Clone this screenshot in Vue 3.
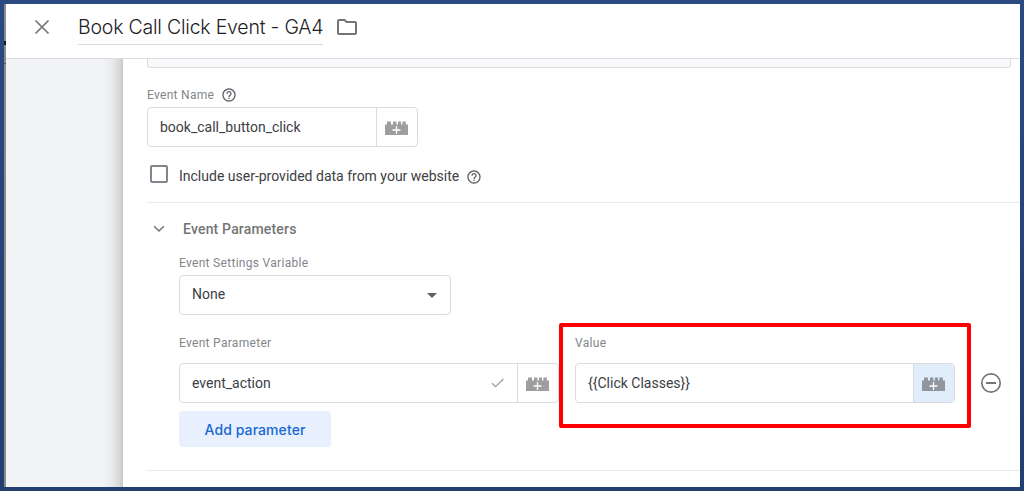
<script setup>
import { h } from 'vue'

const clickValue = '{{Click Classes}}'

const BrickIcon = () =>
  h('svg', { width: 23, height: 14, viewBox: '0 0 23 14' }, [
    h('path', {
      fill: 'currentColor',
      d: 'M0 3.4h2V0.6h4v2.8h2V0.6h3.4v2.8h1.6V0.6h3v2.8h1.4V0.6h3.4v2.8h2.2V14H0z',
    }),
    h('path', { d: 'M11.5 5v8M7.5 9h8', stroke: '#fff', 'stroke-width': 1.3 }),
  ])

const HelpIcon = () =>
  h('svg', { width: 16, height: 16, viewBox: '0 0 24 24', fill: '#5f6368' }, [
    h('path', {
      d: 'M11 18h2v-2h-2v2zm1-16C6.48 2 2 6.48 2 12s4.48 10 10 10 10-4.48 10-10S17.52 2 12 2zm0 18c-4.41 0-8-3.59-8-8s3.59-8 8-8 8 3.59 8 8-3.59 8-8 8zm0-14c-2.21 0-4 1.79-4 4h2c0-1.1.9-2 2-2s2 .9 2 2c0 2-3 1.75-3 5h2c0-2.25 3-2.5 3-5 0-2.21-1.79-4-4-4z',
    }),
  ])
</script>

<template>
  <div class="frame">
    <div class="strip"><i class="strip-mark"></i><i class="strip-line"></i></div>
    <div class="sheet">
      <header class="header">
        <svg class="close" width="16" height="16" viewBox="0 0 16 16">
          <path d="M1.5 1.5l13 13M14.5 1.5l-13 13" stroke="#757575" stroke-width="1.7" />
        </svg>
        <h1 class="title"><span>Book Call Click Event - GA4</span></h1>
        <svg class="folder" width="24" height="24" viewBox="0 0 24 24">
          <path
            fill="#757575"
            d="M9.17 6l2 2H20v10H4V6h5.17M10 4H4c-1.1 0-1.99.9-1.99 2L2 18c0 1.1.9 2 2 2h16c1.1 0 2-.9 2-2V8c0-1.1-.9-2-2-2h-8l-2-2z"
          />
        </svg>
      </header>
      <div class="body">
        <aside class="gutter"></aside>
        <main class="panel">
          <div class="cut-box"></div>
          <div class="label name-label"><span class="t-name">Event Name</span><HelpIcon class="help" /></div>
          <div class="field name-field">
            <div class="input"><span class="t-book">book_call_button_click</span></div>
            <div class="brick"><BrickIcon /></div>
          </div>
          <div class="check-row">
            <i class="checkbox"></i>
            <span class="t-include">Include user-provided data from your website</span>
            <HelpIcon class="help" />
          </div>
          <div class="section-head">
            <svg width="12" height="8" viewBox="0 0 12 8">
              <path d="M1.2 1.2L6 6l4.8-4.8" fill="none" stroke="#757575" stroke-width="1.5" />
            </svg>
            <h2><span>Event Parameters</span></h2>
          </div>
          <section class="params">
            <div class="label"><span class="t-settings">Event Settings Variable</span></div>
            <div class="field select">
              <span class="t-none">None</span>
              <i class="caret"></i>
            </div>
            <div class="pair">
              <div class="col">
                <div class="label"><span class="t-param">Event Parameter</span></div>
                <div class="field">
                  <div class="input">
                    <span class="t-action">event_action</span>
                    <svg class="tick" width="14" height="10" viewBox="0 0 14 10">
                      <path d="M1 5.3l3.5 3.4L12.4 1" fill="none" stroke="#9e9e9e" stroke-width="1.3" />
                    </svg>
                  </div>
                  <div class="brick"><BrickIcon /></div>
                </div>
              </div>
              <div class="col value-col">
                <div class="label"><span class="t-value">Value</span></div>
                <div class="field">
                  <div class="input"><span class="t-click">{{ clickValue }}</span></div>
                  <div class="brick active"><BrickIcon /></div>
                </div>
                <i class="highlight"></i>
              </div>
              <svg class="minus" width="22" height="22" viewBox="0 0 22 22">
                <circle cx="11" cy="11" r="9.2" fill="none" stroke="#757575" stroke-width="1.7" />
                <path d="M6 11h10" stroke="#757575" stroke-width="2" />
              </svg>
            </div>
            <button class="add"><span>Add parameter</span></button>
          </section>
          <div class="divider"></div>
        </main>
      </div>
    </div>
  </div>
</template>

<style>
body { margin: 0; overflow: hidden; }
</style>

<style scoped>
.frame {
  box-sizing: border-box;
  width: 1024px;
  height: 491px;
  padding: 4px;
  display: flex;
  overflow: hidden;
  background: linear-gradient(#2a4a82, #233e70);
  font-family: Roboto, "Liberation Sans", sans-serif;
  font-size: 14px;
  color: #3c4043;
}
.frame * { box-sizing: border-box; }
span { white-space: nowrap; }
svg { display: block; flex: none; }
.strip { width: 2px; background: #8b8b8b; position: relative; }
.strip-mark { position: absolute; left: 0; top: 37px; width: 2px; height: 4px; background: #17171c; }
.strip-line { position: absolute; left: 0; top: 59px; width: 2px; height: 1px; background: #555; }
.sheet { flex: 1; background: #fff; display: flex; flex-direction: column; }
.header {
  height: 55px;
  flex: none;
  display: flex;
  align-items: flex-start;
  border-bottom: 1px solid #dadce0;
}
.close { margin: 15px 0 0 28px; }
.title {
  margin: 7px 0 0 28px;
  width: 245px;
  height: 34px;
  border-bottom: 1px solid #dadce0;
  font: 300 19.5px/32px Inter, sans-serif;
  letter-spacing: -0.21px;
  color: #202124;
}
.folder { margin: 11px 0 0 12px; }
.body { flex: 1; display: flex; min-height: 0; }
.gutter {
  width: 117px;
  background: linear-gradient(to right, #f1f3f4 0, #f1f3f4 98px, #e8eaeb 106px, #dadcdd 112px, #c8caca 117px);
}
.panel { flex: 1; padding-left: 24px; }
.cut-box {
  width: 864px;
  height: 9px;
  background: #f8f9fa;
  border: 1px solid #dadce0;
  border-top: 0;
  border-radius: 0 0 4px 4px;
}
.label { height: 16px; display: flex; align-items: center; font-size: 12px; color: #80868b; }
.name-label { margin-top: 19px; }
.help { margin-left: 7px; }
.field { height: 40px; display: flex; border: 1px solid #dadce0; border-radius: 4px; overflow: hidden; }
.name-field { width: 271px; margin-top: 4px; }
.input { flex: 1; display: flex; align-items: center; padding: 0 12px; }
.brick {
  width: 41px;
  border-left: 1px solid #dadce0;
  display: flex;
  align-items: center;
  justify-content: center;
  padding: 1px 1px 0 0;
  color: #9e9e9e;
}
.brick.active { background: #e2edfb; color: #8f969f; }
.check-row { height: 56px; border-bottom: 1px solid #e8eaed; display: flex; align-items: flex-start; padding: 18px 0 0 3px; }
.checkbox { width: 18px; height: 18px; border: 2px solid #80868b; border-radius: 2px; margin-right: 11px; }
.check-row span { line-height: 22px; }
.check-row .help { margin-top: 4px; }
.section-head { height: 52px; display: flex; align-items: center; padding-left: 6px; }
.section-head h2 { margin: 0 0 0 18px; font-size: 14px; line-height: 20px; font-weight: 500; letter-spacing: 0.18px; color: #757575; }
.params { padding-left: 32px; }
.select { width: 272px; margin-top: 4px; padding: 0 13px 0 12px; align-items: center; justify-content: space-between; }
.t-none { padding-bottom: 2px; }
.caret { border: 5px solid transparent; border-top-color: #616161; border-bottom: 0; }
.pair { display: flex; margin-top: 20px; }
.col { width: 380px; }
.value-col { margin-left: 16px; position: relative; }
.pair .field { margin-top: 12px; }
.tick { margin-left: auto; }
.highlight { position: absolute; left: -16px; top: -12px; width: 412px; height: 105px; border: 4px solid #f00; border-radius: 2px; }
.minus { margin: 37px 0 0 25px; }
.add {
  display: block;
  width: 152px;
  height: 36px;
  margin-top: 8px;
  padding: 2px 0 0;
  border: 0;
  border-radius: 4px;
  background: #e8f0fe;
  color: #1967d2;
  font: 500 14px/34px Inter, sans-serif;
  letter-spacing: 0.08px;
}
.divider { margin-top: 23px; height: 1px; background: #e8eaed; }
.t-name, .t-settings, .t-param, .t-value { letter-spacing: 0.3px; }
</style>
